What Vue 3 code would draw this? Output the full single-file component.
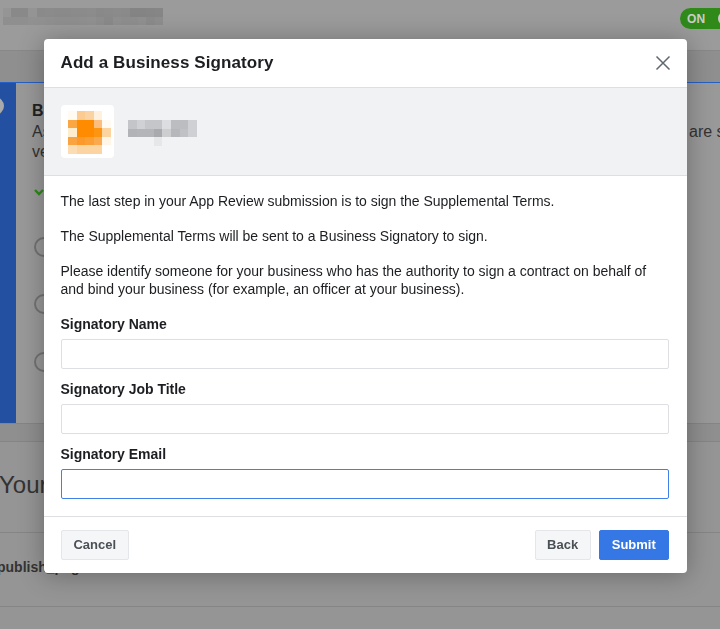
<script setup>
const logoCells = [
  '#fffaf2', '#fbcb92', '#fbd3a3', '#fff1dd', '#fff',
  '#f9a643', '#ff8c00', '#ff8c00', '#fbbe7e', '#fffaf2',
  '#fdeccd', '#ff8c00', '#ff8c00', '#fd9412', '#fbd49f',
  '#f9a441', '#fb9a2b', '#fb9f35', '#faa94f', '#fff6e8',
  '#fcdcb2', '#fcd4a2', '#fcd4a2', '#fcd4a2', '#fff'
]
const nameCells = [
  '#c4c5c8', '#d0d1d4', '#c5c6c9', '#c5c6c9', '#dcdde0', '#bcbdc0', '#bcbdc0', '#cfd0d3',
  '#b2b3b6', '#b4b5b8', '#b4b5b8', '#a9aaad', '#ccced0', '#b6b7ba', '#c0c1c4', '#cfd0d3',
  '#f1f2f4', '#f1f2f4', '#f1f2f4', '#e6e7e9', '#f1f2f4', '#f1f2f4', '#f1f2f4', '#f1f2f4'
]
const topCells = [
  '#959595', '#898989', '#898989', '#949494', '#8a8a8a', '#8b8b8b', '#8a8a8a', '#8a8a8a', '#8b8b8b', '#8b8b8b', '#8c8c8c', '#898989', '#8a8a8a', '#8b8b8b', '#8a8a8a', '#848484', '#848484', '#858585', '#868686',
  '#8f8f8f', '#8f8f8f', '#8f8f8f', '#919191', '#919191', '#909090', '#8f8f8f', '#8f8f8f', '#8f8f8f', '#909090', '#919191', '#8e8e8e', '#8a8a8a', '#909090', '#8e8e8e', '#8e8e8e', '#909090', '#8b8b8b', '#8e8e8e'
]
const fields = ['Signatory Name', 'Signatory Job Title', 'Signatory Email']
const steps = [1, 2, 3]
</script>

<template>
  <div class="page">
    <header class="topbar">
      <div class="mosaic top-mosaic">
        <i v-for="(c, i) in topCells" :key="i" :style="{ background: c }"></i>
      </div>
      <div class="toggle"><span>ON</span><b></b></div>
    </header>
    <div class="band"></div>
    <section class="panel">
      <aside class="strip"><b></b></aside>
      <div class="panel-body">
        <h3>Business Verification</h3>
        <div class="desc">
          <p>As part of App Review, we need to verify your business</p>
          <span>are submitted</span>
        </div>
        <p class="desc2">verified</p>
        <svg class="chev" width="10" height="7" viewBox="0 0 10 7"><path d="M1 1l4 4 4-4" fill="none" stroke="#2f8a1a" stroke-width="2.4"/></svg>
        <div v-for="s in steps" :key="s" class="circle"></div>
      </div>
    </section>
    <div class="gap"></div>
    <h2 class="your">Your App</h2>
    <div class="publish">publish_pages</div>
  </div>

  <div class="layer">
    <div class="modal">
      <div class="m-head">
        <h1>Add a Business Signatory</h1>
        <button class="close" aria-label="Close">
          <svg width="16" height="16" viewBox="0 0 16 16"><path d="M1.5 1.5l13 13M14.5 1.5l-13 13" stroke="#606770" stroke-width="1.5" fill="none"/></svg>
        </button>
      </div>
      <div class="m-app">
        <div class="tile">
          <div class="mosaic logo-mosaic">
            <i v-for="(c, i) in logoCells" :key="i" :style="{ background: c }"></i>
          </div>
        </div>
        <div class="mosaic name-mosaic">
          <i v-for="(c, i) in nameCells" :key="i" :style="{ background: c }"></i>
        </div>
      </div>
      <div class="m-body">
        <p>The last step in your App Review submission is to sign the Supplemental Terms.</p>
        <p>The Supplemental Terms will be sent to a Business Signatory to sign.</p>
        <p>Please identify someone for your business who has the authority to sign a contract on behalf of and bind your business (for example, an officer at your business).</p>
        <label v-for="(f, i) in fields" :key="f" class="field">
          <span>{{ f }}</span>
          <input type="text" :class="{ focus: i === 2 }" />
        </label>
      </div>
      <div class="m-foot">
        <button class="btn">Cancel</button>
        <div class="right">
          <button class="btn">Back</button>
          <button class="btn primary">Submit</button>
        </div>
      </div>
    </div>
  </div>
</template>

<style>
html, body { margin: 0; height: 100%; overflow: hidden; background: #949494; }
</style>

<style scoped>
* { box-sizing: border-box; }
.page { font-family: "Liberation Sans", Arial, sans-serif; color: #111; height: 629px; overflow: hidden; background: #959595; }
.topbar { height: 51px; background: #9b9b9b; border-bottom: 1px solid #888; display: flex; justify-content: space-between; padding: 8px 0 0 3px; overflow: hidden; }
.mosaic { display: grid; }
.mosaic i { display: block; }
.top-mosaic { grid-template-columns: repeat(19, 8.45px); grid-auto-rows: 8.5px; }
.toggle { width: 60px; height: 21px; margin-right: -20px; border-radius: 11px; background: #2f8a1a; color: #ccc; font-size: 12px; font-weight: 700; letter-spacing: .2px; display: flex; align-items: center; padding-left: 7px; gap: 13px; }
.toggle b { width: 15px; height: 15px; border-radius: 50%; background: #c8c8c8; }
.band { height: 32px; background: #8f8f8f; border-bottom: 1px solid #2660c4; }
.panel { height: 341px; display: flex; background: #999; border-bottom: 1px solid #858585; }
.strip { width: 16px; background: #2350a0; overflow: hidden; padding-top: 14px; }
.strip b { display: block; width: 18px; height: 18px; margin-left: -14px; border-radius: 50%; background: #aaa; }
.panel-body { flex: 1; min-width: 0; padding: 19px 0 0 16px; overflow: hidden; }
h3 { margin: 0; font-size: 16px; line-height: 18px; font-weight: 700; white-space: nowrap; color: #222; }
.desc { display: flex; justify-content: space-between; font-size: 16px; line-height: 20px; margin-top: 2px; white-space: nowrap; color: #333; }
.desc p { margin: 0; }
.desc span { width: 31px; overflow: hidden; }
.desc2 { margin: 0; font-size: 16px; line-height: 19px; color: #333; }
.chev { display: block; margin: 28px 0 0 2px; }
.circle { width: 20px; height: 20px; margin: 0 0 37.7px 2px; border: 2px solid #737373; border-radius: 50%; }
.chev + .circle { margin-top: 40.5px; }
.gap { height: 18px; background: #8f8f8f; border-bottom: 1px solid #858585; }
.your { margin: 0; height: 91px; padding: 26px 0 0 0; margin-left: -1px; font-size: 24px; line-height: 34px; font-weight: 400; color: #333; border-bottom: 1px solid #858585; }
.publish { height: 74px; padding-top: 25px; margin-left: -3px; font-size: 14px; line-height: 18px; font-weight: 700; color: #333; border-bottom: 1px solid #858585; }

.layer { position: fixed; inset: 0; padding: 39px 0 0 44px; font-family: "Liberation Sans", Arial, sans-serif; color: #1c1e21; }
.modal { width: 643px; height: 534px; background: #fff; border-radius: 4px; box-shadow: 0 2px 26px rgba(0, 0, 0, .3), 0 0 1px rgba(0, 0, 0, .1); display: flex; flex-direction: column; overflow: hidden; }
.m-head { height: 49px; padding: 0 16.5px; border-bottom: 1px solid #dddfe2; display: flex; align-items: center; justify-content: space-between; flex: none; }
h1 { margin: 0; font-size: 17px; letter-spacing: .1px; line-height: 22px; font-weight: 700; }
.close { padding: 0; width: 16px; height: 16px; border: 0; background: none; display: block; margin: 0; }
.close svg { display: block; }
.m-app { height: 88px; flex: none; background: #f1f2f4; border-bottom: 1px solid #dddfe2; padding: 17px 0 0 17px; display: flex; gap: 14px; }
.tile { width: 53px; height: 53px; background: #fff; border-radius: 4px; padding: 6px 0 0 7px; }
.logo-mosaic { grid-template-columns: repeat(5, 8.5px); grid-auto-rows: 8.5px; }
.name-mosaic { grid-template-columns: repeat(8, 8.6px); grid-auto-rows: 8.5px; margin-top: 15px; height: 26px; }
.m-body { flex: 1; padding: 16px 17px 0 16.5px; font-size: 14px; line-height: 18px; letter-spacing: -.02px; }
.m-body p { margin: 0 0 17px; }
.field { display: block; margin-bottom: 11px; }
.field span { display: block; font-weight: 700; margin-bottom: 6px; }
.field input { display: block; width: 608px; margin-left: .5px; height: 30px; padding: 0 8px; border: 1px solid #dddfe2; border-radius: 2px; background: #fff; outline: none; font: inherit; }
.field input.focus { border-color: #4080e8; }
.m-foot { height: 57px; flex: none; border-top: 1px solid #dddfe2; padding: 13px 18px 0 17px; display: flex; justify-content: space-between; }
.right { display: flex; gap: 8px; }
.btn { height: 30px; padding: 0 12.2px 2px 11.4px; border: 1px solid #e4e6e9; border-radius: 2px; background: #f5f6f7; color: #4b4f56; font-family: inherit; font-size: 13px; font-weight: 700; }
.btn.primary { background: #3578e5; border-color: #3578e5; color: #fff; }
</style>
